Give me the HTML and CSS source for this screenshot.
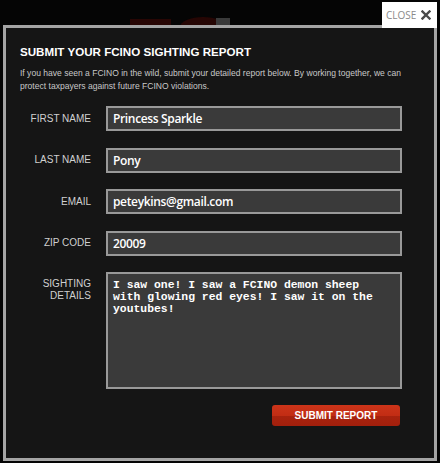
FILE: index.html
```html
<!DOCTYPE html>
<html lang="en">
<head>
    <meta charset="UTF-8">
    <meta name="viewport" content="width=device-width, initial-scale=1.0">
    <title>Submit Your FCINO Sighting Report</title>
    <link rel="stylesheet" href="styles.css">
</head>
<body>
    <div class="backdrop">
        <span class="blob blob-red"></span>
        <span class="blob blob-round"></span>
        <span class="blob blob-gray"></span>
    </div>
    <a class="close" href="#">CLOSE
        <svg class="close-x" width="10" height="10" viewBox="0 0 10 10" aria-hidden="true">
            <path d="M1.5 1.5 L8.5 8.5 M8.5 1.5 L1.5 8.5" stroke="#4a4a4a" stroke-width="2.4" stroke-linecap="square"/>
        </svg>
    </a>
    <div class="modal">
        <h1>SUBMIT YOUR FCINO SIGHTING REPORT</h1>
        <p class="intro">If you have seen a FCINO in the wild, submit your detailed report below. By working together, we can protect taxpayers against future FCINO violations.</p>
        <form id="report-form" class="report-form">
            <div class="form-row">
                <label for="first_name">FIRST NAME</label>
                <input type="text" id="first_name" name="first_name" value="Princess Sparkle">
            </div>
            <div class="form-row">
                <label for="last_name">LAST NAME</label>
                <input type="text" id="last_name" name="last_name" value="Pony">
            </div>
            <div class="form-row">
                <label for="email">EMAIL</label>
                <input type="text" id="email" name="email" value="peteykins@gmail.com">
            </div>
            <div class="form-row">
                <label for="zip">ZIP CODE</label>
                <input type="text" id="zip" name="zip" value="20009">
            </div>
            <div class="form-row form-row-top">
                <label for="details">SIGHTING<br>DETAILS</label>
                <textarea id="details" name="details" spellcheck="false">I saw one! I saw a FCINO demon sheep with glowing red eyes! I saw it on the youtubes!</textarea>
            </div>
            <div class="form-actions">
                <button type="submit">SUBMIT REPORT</button>
            </div>
        </form>
    </div>
</body>
</html>
```

FILE: styles.css
```css
html, body {
    margin: 0;
    padding: 0;
}
body {
    background-color: #050505;
    font-family: "Liberation Sans", Arial, sans-serif;
    width: 440px;
    height: 463px;
    overflow: hidden;
    position: relative;
}
.backdrop {
    position: absolute;
    top: 0;
    left: 0;
    width: 440px;
    height: 463px;
}
.blob {
    position: absolute;
    display: block;
}
.blob-red {
    left: 130px;
    top: 19px;
    width: 41px;
    height: 8px;
    background-color: #280604;
}
.blob-round {
    left: 180px;
    top: 17px;
    width: 46px;
    height: 20px;
    border-radius: 50%;
    background-color: #260604;
}
.blob-gray {
    left: 216px;
    top: 18px;
    width: 14px;
    height: 8px;
    background-color: #3a3a3a;
}
.close {
    position: absolute;
    top: 2px;
    left: 382px;
    width: 55px;
    height: 26px;
    background-color: #fff;
    color: #8a8a8a;
    font-family: "Open Sans", "DejaVu Sans", sans-serif;
    font-size: 10px;
    line-height: 26px;
    text-decoration: none;
    box-sizing: border-box;
    padding-left: 4px;
    z-index: 2;
}
.close-x {
    vertical-align: -1px;
    margin-left: 2px;
}
.modal {
    position: relative;
    margin: 25px 0 0 3px;
    width: 434px;
    height: 436px;
    box-sizing: border-box;
    border: 3px solid #a4a4a4;
    background-color: #151515;
    padding: 17px 14px 0 14px;
}
h1 {
    margin: 0;
    color: #fff;
    font-size: 11.6px;
    font-weight: bold;
    line-height: 14px;
}
.intro {
    margin: 8px 0 0 0;
    color: #c8c8c8;
    font-size: 8.55px;
    line-height: 13px;
}
.report-form {
    margin-top: 13px;
}
.form-row {
    display: flex;
    align-items: center;
    margin-bottom: 16.5px;
}
.form-row-top {
    align-items: flex-start;
}
label {
    width: 71px;
    flex: none;
    text-align: right;
    color: #d0d0d0;
    font-size: 10px;
    line-height: 12px;
    margin-right: 15px;
}
.form-row-top label {
    padding-top: 6px;
}
input[type="text"], textarea {
    width: 296px;
    box-sizing: border-box;
    border: 2px solid #999;
    background-color: #3a3a3a;
    color: #fff;
    margin: 0;
    outline: none;
}
input[type="text"] {
    height: 25px;
    padding: 0 5px;
    font-family: "Open Sans", "DejaVu Sans", sans-serif;
    font-weight: 600;
    font-size: 12px;
    letter-spacing: -0.35px;
}
textarea {
    height: 117px;
    padding: 5px 22px 4px 5px;
    font-family: "Liberation Mono", "Courier New", monospace;
    font-weight: bold;
    font-size: 11.4px;
    line-height: 12px;
    resize: none;
    overflow: hidden;
}
.form-actions {
    display: flex;
    justify-content: flex-end;
    padding-right: 20px;
    margin-top: -0.5px;
}
button {
    width: 128px;
    height: 21px;
    border: none;
    border-radius: 3px;
    background: linear-gradient(#cc3419, #c22d14 50%, #a8230e 51%, #a21f0c);
    color: #fff;
    font-family: "Liberation Sans", Arial, sans-serif;
    font-weight: bold;
    font-size: 10px;
    padding: 0;
    cursor: pointer;
}
```
